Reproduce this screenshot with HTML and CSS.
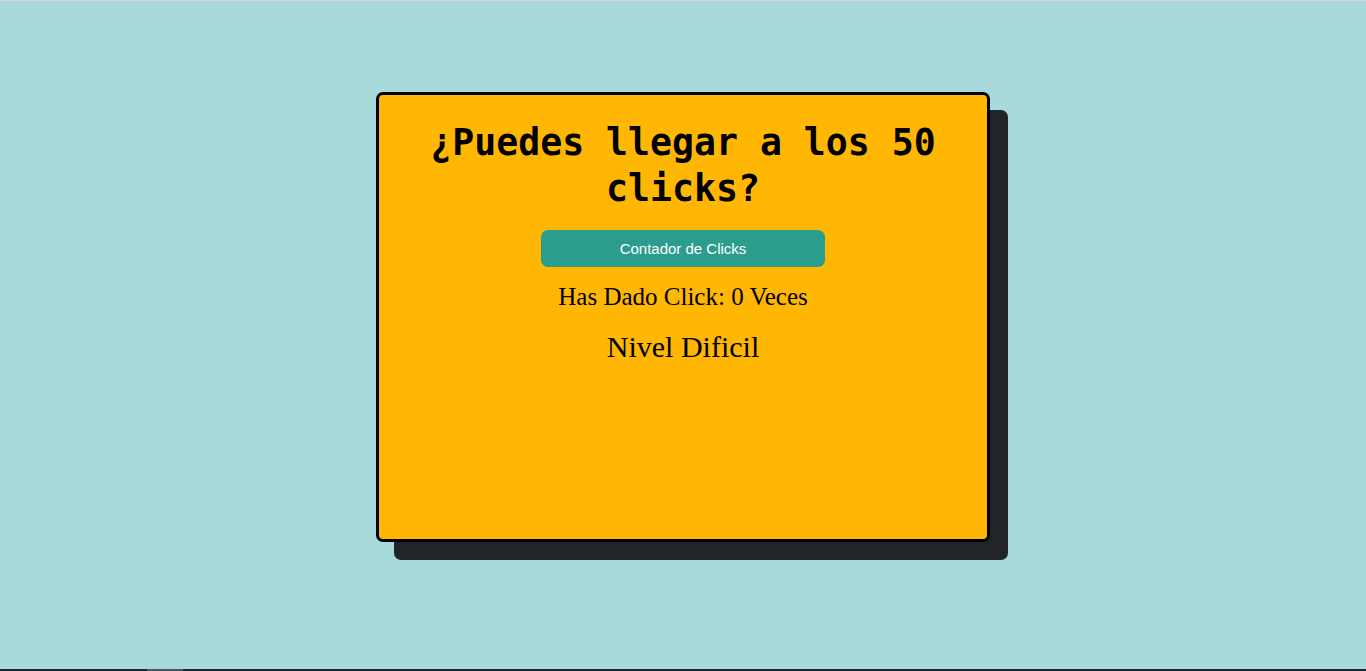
FILE: index.html
```html
<!DOCTYPE html>
<html lang="es">
<head>
<meta charset="utf-8">
<title>Contador de Clicks</title>
<link rel="stylesheet" href="styles.css">
</head>
<body>
<main class="page">
  <section class="card">
    <h1 class="title">¿Puedes llegar a los 50 clicks?</h1>
    <button class="counter-btn" type="button">Contador de Clicks</button>
    <p class="count">Has Dado Click: 0 Veces</p>
    <p class="level">Nivel Dificil</p>
  </section>
</main>
<div class="hscroll"><div class="thumb"></div></div>
</body>
</html>
```
FILE: styles.css
```css
html, body {
  margin: 0;
  padding: 0;
  height: 100%;
}
body {
  background: #a8dadc;
  border-top: 1px solid #d6d6d6;
  box-sizing: border-box;
  display: flex;
  flex-direction: column;
  overflow: hidden;
}
.page {
  flex: 1;
  display: flex;
  justify-content: center;
  align-items: flex-start;
  padding-top: 91px;
}
.card {
  width: 614px;
  height: 450px;
  box-sizing: border-box;
  background: #ffb703;
  border: 3px solid #000;
  border-radius: 7px;
  box-shadow: 18px 18px 0 0 #212529;
  display: flex;
  flex-direction: column;
  align-items: center;
  padding: 25px 30px 0;
}
.title {
  margin: 0;
  font-family: "DejaVu Sans Mono", monospace;
  font-weight: bold;
  font-size: 36.5px;
  line-height: 46px;
  text-align: center;
  color: #000;
}
.counter-btn {
  margin-top: 18px;
  width: 284px;
  height: 37px;
  border: none;
  border-radius: 7px;
  background: #2a9d8f;
  color: #fff;
  font-family: "Liberation Sans", Arial, sans-serif;
  font-size: 15px;
  cursor: pointer;
}
.count {
  margin: 15px 0 0;
  font-family: "Liberation Serif", "Times New Roman", serif;
  font-size: 25px;
  line-height: 29px;
  color: #000;
}
.level {
  margin: 18px 0 0;
  font-family: "Liberation Serif", "Times New Roman", serif;
  font-size: 30px;
  line-height: 35px;
  color: #000;
}
.hscroll {
  height: 2px;
  background: #1c2630;
  position: relative;
}
.thumb {
  position: absolute;
  left: 147px;
  top: 0;
  width: 36px;
  height: 2px;
  background: #4a5560;
}
```
